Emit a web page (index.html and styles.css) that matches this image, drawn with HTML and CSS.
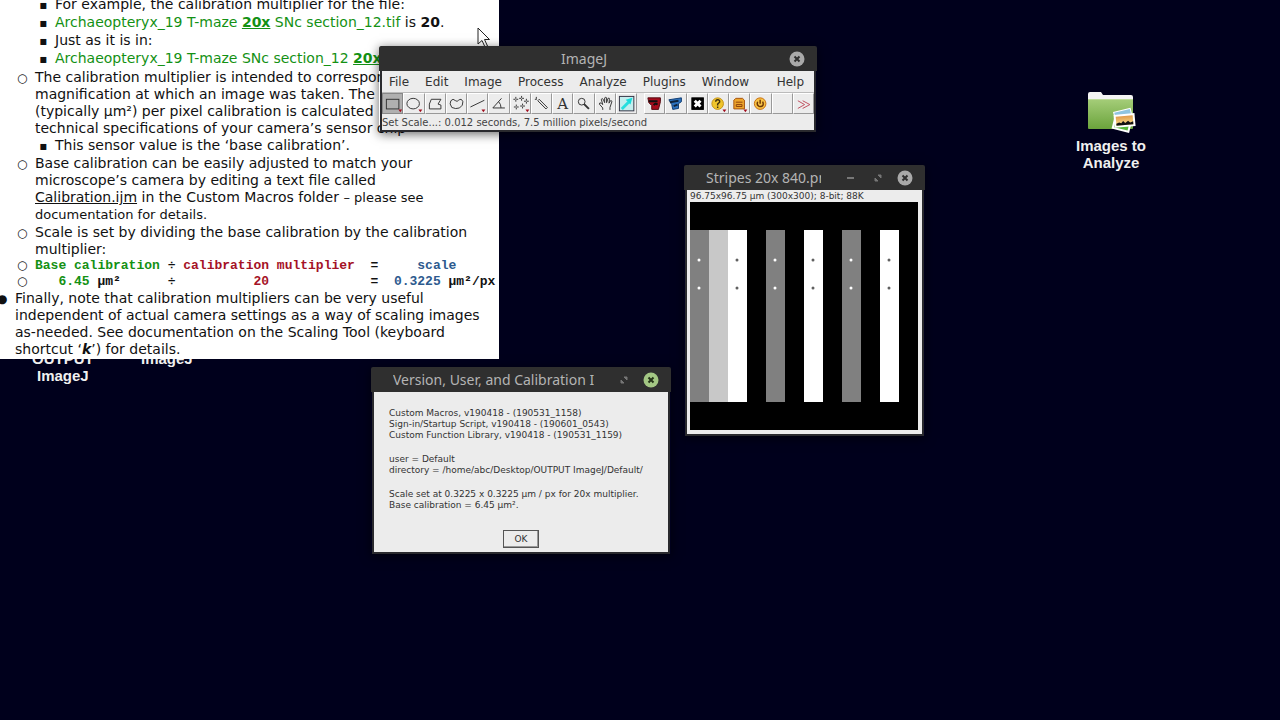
FILE: index.html
```html
<!DOCTYPE html>
<html lang="en">
    <head>
        <meta charset="utf-8">
        <title>ImageJ scaling</title>
        <link rel="stylesheet" href="styles.css">
    </head>
    <body>
        <main class="desktop">
            <!-- desktop icons -->
            <div class="icon iconOutput">OUTPUT<br>ImageJ</div>
            <div class="icon iconImagej">ImageJ</div>
            <div class="icon iconImages">
                <svg width="50" height="42" viewBox="0 0 50 42">
                    <defs>
                        <linearGradient id="folder" x1="0" y1="0" x2="0" y2="1">
                            <stop offset="0" stop-color="#a5cd79"/>
                            <stop offset="1" stop-color="#6ba43c"/>
                        </linearGradient>
                        <linearGradient id="sunset" x1="0" y1="0" x2="0" y2="1">
                            <stop offset="0" stop-color="#e09a4c"/>
                            <stop offset="1" stop-color="#fbe08a"/>
                        </linearGradient>
                    </defs>
                    <path d="M2 3 Q2 1 4 1 H15 L17 4 H45 Q47 4 47 6 V14 H2 Z" fill="#f4f4f4"/>
                    <rect x="2" y="8" width="45" height="30" rx="1" fill="url(#folder)"/>
                    <path d="M2 8.500 H47" stroke="#bcdc98"/>
                    <g transform="rotate(14 36 33)">
                        <rect x="27" y="26" width="18" height="14" fill="#fff"/>
                        <rect x="29" y="28" width="14" height="10" fill="#58b83a"/>
                    </g>
                    <g transform="rotate(-14 36 24)">
                        <rect x="28" y="19" width="18" height="12" fill="#fff"/>
                        <rect x="29" y="20" width="16" height="10" fill="#8fc4e0"/>
                    </g>
                    <g transform="rotate(-5 38 29)">
                        <rect x="28" y="23" width="21" height="13" fill="#fff"/>
                        <rect x="30" y="25" width="17" height="9" fill="url(#sunset)"/>
                        <path d="M30 34 V32 L33 31 L35 32 L37 30 L39 32 L42 30 L44 32 L47 31 V34 Z" fill="#111"/>
                    </g>
                </svg>
                <span>Images to<br>Analyze</span>
            </div>

            <!-- notes -->
            <section class="notes">
                <ul class="outer">
                    <li class="blank">
                        <ul class="circles">
                            <li class="blank">
                                <ul class="squares">
                                    <li>For example, the calibration multiplier for the file:</li>
                                    <li><span class="green">Archaeopteryx_19 T-maze <b><u>20x</u></b> SNc section_12.tif</span> is <b>20</b>.</li>
                                    <li>Just as it is in:</li>
                                    <li><span class="green">Archaeopteryx_19 T-maze SNc section_12 <b><u>20x</u></b></span></li>
                                </ul>
                            </li>
                            <li>The calibration multiplier is intended to correspond<br>
                                magnification at which an image was taken. The<br>
                                (typically µm²) per pixel calibration is calculated<br>
                                technical specifications of your camera’s sensor chip
                                <ul class="squares">
                                    <li>This sensor value is the ‘base calibration’.</li>
                                </ul>
                            </li>
                            <li>Base calibration can be easily adjusted to match your<br>
                                microscope’s camera by editing a text file called<br>
                                <u>Calibration.ijm</u> in the Custom Macros folder <small>– please see<br>
                                documentation for details.</small>
                            </li>
                            <li>Scale is set by dividing the base calibration by the calibration<br>
                                multiplier:</li>
                            <li class="formula"><span class="green">Base calibration</span> ÷ <span class="red">calibration multiplier</span>  =     <span class="blue">scale</span></li>
                            <li class="formula">   <span class="green">6.45</span> µm²      ÷          <span class="red">20</span>             =  <span class="blue">0.3225</span> µm²/px</li>
                        </ul>
                    </li>
                    <li>Finally, note that calibration multipliers can be very useful<br>
                        independent of actual camera settings as a way of scaling images<br>
                        as-needed. See documentation on the Scaling Tool (keyboard<br>
                        shortcut ‘<b><i>k</i></b>’) for details.</li>
                </ul>
            </section>

            <svg class="cursor" width="14" height="22" viewBox="0 0 14 22">
                <path d="M1 1 V17 L5 13.500 L8 20 L10.500 19 L7.500 12.500 H12.500 Z" fill="#fff" stroke="#222"/>
            </svg>

            <!-- ImageJ main window -->
            <section class="window mainWin">
                <header class="titleBar">
                    <h2 class="centered">ImageJ</h2>
                    <button class="winBtn close" aria-label="Close">
                        <svg width="16" height="16" viewBox="0 0 16 16"><circle cx="8" cy="8" r="7.500" fill="#a9a9a9"/><path d="M5.500 5.500 L10.500 10.500 M10.500 5.500 L5.500 10.500" stroke="#2f2f2f" stroke-width="2"/></svg>
                    </button>
                </header>
                <div class="winBody">
                    <nav class="menu">
                        <button>File</button>
                        <button>Edit</button>
                        <button>Image</button>
                        <button>Process</button>
                        <button>Analyze</button>
                        <button>Plugins</button>
                        <button>Window</button>
                        <button class="help">Help</button>
                    </nav>
                    <div class="tools">
                        <button class="on" aria-label="Rectangle"><svg viewBox="0 0 20 20"><rect x="3.500" y="5.500" width="13" height="10"/><path class="tri" d="M16 16 h4 l-2 3z"/></svg></button>
                        <button aria-label="Oval"><svg viewBox="0 0 20 20"><ellipse cx="9.500" cy="10" rx="6.500" ry="5.500"/><path class="tri" d="M15 16 h4 l-2 3z"/></svg></button>
                        <button aria-label="Polygon"><svg viewBox="0 0 20 20"><path d="M5.500 5.500 H15.500 L12.500 10.500 L15.500 11.500 V15.500 H3.500 V10.500 Z"/></svg></button>
                        <button aria-label="Freehand"><svg viewBox="0 0 20 20"><path d="M4 7 Q6 4 9 7 Q10.500 8.500 12 6.500 Q15 4 16.500 8 Q17 12 13 14.500 Q9 16 5 14 Q2 10 4 7 Z"/></svg></button>
                        <button aria-label="Line"><svg viewBox="0 0 20 20"><path d="M2.500 13.500 L17 6.500"/><path class="tri" d="M14 16 h4 l-2 3z"/></svg></button>
                        <button aria-label="Angle"><svg viewBox="0 0 20 20"><path d="M13 4.500 L4 14.500 H16.500 M10 8 Q12.500 10.500 12.500 14.500"/></svg></button>
                        <button aria-label="Multi-point"><svg viewBox="0 0 20 20"><path d="M5 3v5 M2.500 5.500h5 M11 2v5 M8.500 4.500h5 M16 5v5 M13.500 7.500h5 M5.500 11v5 M3 13.500h5 M12 10v5 M9.500 12.500h5" stroke-dasharray="2 1"/><path class="tri" d="M15 16 h4 l-2 3z"/></svg></button>
                        <button aria-label="Wand"><svg viewBox="0 0 20 20"><path d="M6 7 L14.500 15.500 L16 14 L7.500 5.500 Z M4.500 3v2 M3 5.500h2"/></svg></button>
                        <button aria-label="Text" class="letter">A</button>
                        <button aria-label="Magnifier"><svg viewBox="0 0 20 20"><circle cx="8" cy="8" r="3.500"/><path d="M10.500 10.500 L15.500 15.500" stroke-width="2"/></svg></button>
                        <button aria-label="Hand"><svg viewBox="0 0 20 20"><path d="M7 16.500 V14.500 L3.500 10.500 Q3.500 8.500 5.500 9.500 L7 11 L5.500 5.500 Q6.500 4 7.500 5.500 L9 9 V4 Q10.500 2.500 11 4 V9 L12.500 4.500 Q14 3.500 14 5.500 L13.500 9.500 L15 7 Q16.500 6.500 16.500 8 L14.500 14 V16.500"/></svg></button>
                        <button aria-label="Color picker"><svg viewBox="0 0 20 20"><rect x="2.500" y="2.500" width="15" height="15" fill="#c4eeee" stroke="#334"/><path d="M5 15.500 L12 8.500" stroke="#27dede" stroke-width="3"/><path d="M9 6 L14 11 L16 4 Z" fill="#17dddd" stroke="none"/></svg></button>
                        <span></span>
                        <button aria-label="Macro red"><svg viewBox="0 0 20 20"><path d="M3 4 H16 V8 L14 16 H7 V12 L4 9 Z" fill="#a60c1c" stroke="#520810"/><path d="M4 7.500 H13 M9 11.500 Q11 9 13 11" stroke="#111" stroke-width="2"/></svg></button>
                        <button aria-label="Macro blue"><svg viewBox="0 0 20 20"><path d="M3 6 L16 4 V8 L13 10 V15 L7 16 L6 11 Z" fill="#2c72bf" stroke="#123c70"/><path d="M4 8.500 L13 7 M8 12.500 L12 11" stroke="#10243c" stroke-width="2"/></svg></button>
                        <button aria-label="Close all"><svg viewBox="0 0 20 20"><rect x="4" y="4" width="12" height="12" fill="#000" stroke="#000"/><path d="M7 7 L13 13 M13 7 L7 13" stroke="#fff" stroke-width="3"/></svg></button>
                        <button aria-label="Question"><svg viewBox="0 0 20 20"><circle cx="9" cy="10" r="6" fill="#f0c52c" stroke="#c49217"/><path d="M7 8 Q7 6 9 6 Q11.500 6 11 8.500 L9 10.500 V12 M9 13 V14.500" stroke="#40300c" stroke-width="1.500"/><path class="tri" d="M14 16 h4 l-2 3z"/></svg></button>
                        <button aria-label="Archive"><svg viewBox="0 0 20 20"><path d="M4 15.500 V6.500 L6 4.500 H13 L15 6.500 V15.500 Z" fill="#eda52c" stroke="#a4500c"/><path d="M6 8.500 H13 M6.500 11 V13 H12.500 V11 Z" stroke="#8c410b"/><path class="tri" d="M14 16 h4 l-2 3z"/></svg></button>
                        <button aria-label="Power"><svg viewBox="0 0 20 20"><circle cx="9.500" cy="10" r="6" fill="#f7c245" stroke="#c86c0e"/><path d="M7 8 Q5.500 11 8 12.500 Q11 14 12.500 11.500 Q13 9.500 12 8 M9.500 6 V10" stroke="#6e3706" stroke-width="1.500"/></svg></button>
                        <button aria-label="Empty"></button>
                        <button aria-label="More tools"><svg viewBox="0 0 20 20"><path d="M4 7 L11 11 L4 15 M9 7 L16.500 11 L9 15" stroke="#c04c5c"/></svg></button>
                    </div>
                    <p class="status">Set Scale...: 0.012 seconds, 7.5 million pixels/second</p>
                </div>
            </section>

            <!-- image window -->
            <section class="window stripesWin">
                <header class="titleBar">
                    <h2>Stripes 20x 840.png</h2>
                    <button class="winBtn" aria-label="Minimize">
                        <svg width="16" height="16" viewBox="0 0 16 16"><path d="M4 8 H11" stroke="#777" stroke-width="2"/></svg>
                    </button>
                    <button class="winBtn" aria-label="Maximize">
                        <svg width="16" height="16" viewBox="0 0 16 16"><path d="M8 5 H11 V8 Z M5 8 V11 H8 Z" fill="#777" stroke="#777"/></svg>
                    </button>
                    <button class="winBtn close" aria-label="Close">
                        <svg width="16" height="16" viewBox="0 0 16 16"><circle cx="8" cy="8" r="7.500" fill="#a9a9a9"/><path d="M5.500 5.500 L10.500 10.500 M10.500 5.500 L5.500 10.500" stroke="#2f2f2f" stroke-width="2"/></svg>
                    </button>
                </header>
                <div class="winBody">
                    <p class="info">96.75x96.75 µm (300x300); 8-bit; 88K</p>
                    <svg class="stripes" viewBox="0 0 228 228">
                        <rect width="228" height="228" fill="#000"/>
                        <g fill="#808080">
                            <rect x="0" y="28" width="19" height="172"/>
                            <rect x="76" y="28" width="19" height="172"/>
                            <rect x="152" y="28" width="19" height="172"/>
                        </g>
                        <rect x="19" y="28" width="19" height="172" fill="#c8c8c8"/>
                        <g fill="#fff">
                            <rect x="38" y="28" width="19" height="172"/>
                            <rect x="114" y="28" width="19" height="172"/>
                            <rect x="190" y="28" width="19" height="172"/>
                            <circle cx="9" cy="58" r="1.500"/><circle cx="85" cy="58" r="1.500"/><circle cx="161" cy="58" r="1.500"/>
                            <circle cx="9" cy="86" r="1.500"/><circle cx="85" cy="86" r="1.500"/><circle cx="161" cy="86" r="1.500"/>
                        </g>
                        <g fill="#606060">
                            <circle cx="47" cy="58" r="1.500"/><circle cx="123" cy="58" r="1.500"/><circle cx="199" cy="58" r="1.500"/>
                            <circle cx="47" cy="86" r="1.500"/><circle cx="123" cy="86" r="1.500"/><circle cx="199" cy="86" r="1.500"/>
                        </g>
                    </svg>
                </div>
            </section>

            <!-- startup dialog -->
            <section class="window infoWin">
                <header class="titleBar">
                    <h2>Version, User, and Calibration Info</h2>
                    <button class="winBtn" aria-label="Maximize">
                        <svg width="16" height="16" viewBox="0 0 16 16"><path d="M8 5 H11 V8 Z M5 8 V11 H8 Z" fill="#777" stroke="#777"/></svg>
                    </button>
                    <button class="winBtn close" aria-label="Close">
                        <svg width="16" height="16" viewBox="0 0 16 16"><circle cx="8" cy="8" r="7.500" fill="#a3c784"/><path d="M5.500 5.500 L10.500 10.500 M10.500 5.500 L5.500 10.500" stroke="#243318" stroke-width="2"/></svg>
                    </button>
                </header>
                <div class="winBody">
                    <p>Custom Macros, v190418 - (190531_1158)<br>
                        Sign-in/Startup Script, v190418 - (190601_0543)<br>
                        Custom Function Library, v190418 - (190531_1159)</p>
                    <p>user = Default<br>
                        directory = /home/abc/Desktop/OUTPUT ImageJ/Default/</p>
                    <p>Scale set at 0.3225 x 0.3225 µm / px for 20x multiplier.<br>
                        Base calibration = 6.45 µm².</p>
                    <button class="ok">OK</button>
                </div>
            </section>
        </main>
    </body>
</html>
```
FILE: styles.css
```css
*{
    box-sizing: border-box;
}

body{
    margin: 0;
}

h2, p, ul{
    margin: 0;
    padding: 0;
}

button{
    padding: 0;
    border: 0;
    background: none;
    font: inherit;
    color: inherit;
}

.desktop{
    position: relative;
    min-height: 100vh;
    overflow: hidden;
    background-color: #00001c;
    font-family: "DejaVu Sans", sans-serif;
}

/* desktop icons */
.icon{
    position: absolute;
    display: flex;
    flex-direction: column;
    align-items: center;
    gap: 4px;
    font: bold 15px/17px "Liberation Sans", sans-serif;
    text-align: center;
    color: #f0f0f0;
}

.iconOutput{
    left: 32px;
    top: 350px;
}

.iconImagej{
    left: 141px;
    top: 350px;
}

.iconImages{
    left: 1076px;
    top: 91px;
}

/* notes, the last line stays at the bottom edge */
.notes{
    position: absolute;
    left: 0;
    top: 0;
    width: 499px;
    height: 359px;
    display: flex;
    flex-direction: column;
    justify-content: flex-end;
    overflow: hidden;
    background-color: #fff;
    font-size: 14px;
    line-height: 17px;
    white-space: nowrap;
    color: #111;
}

.notes small{
    font-size: 13px;
}

.notes li::marker{
    font: 12px "DejaVu Sans", sans-serif;
}

.outer{
    padding-left: 15px;
    padding-bottom: 1px;
    list-style: "●  ";
}

.circles{
    padding-left: 20px;
    list-style: "○  ";
}

.circles > li{
    padding-top: 1px;
}

.squares{
    padding-left: 20px;
    list-style: "▪  ";
}

.blank > .squares{
    line-height: 18px;
    padding-bottom: 1px;
}

.notes .blank{
    list-style: none;
}

.notes .formula{
    padding: 0;
    font: bold 13px/16px "Liberation Mono", monospace;
    white-space: pre;
}

.green{
    color: #149114;
}

.red{
    color: #a51226;
}

.blue{
    color: #2d5a8e;
}

.cursor{
    position: absolute;
    left: 477px;
    top: 27px;
}

/* windows */
.window{
    position: absolute;
    box-shadow: 0 2px 10px rgba(0, 0, 0, 0.6);
}

.titleBar{
    display: flex;
    align-items: center;
    gap: 11px;
    height: 25px;
    padding: 0 12px 0 22px;
    border-radius: 2px 2px 0 0;
    background-color: #2f2f2f;
    color: #b4b4b4;
}

.titleBar h2{
    flex: 1;
    margin-right: 11px;
    overflow: hidden;
    white-space: nowrap;
    font: 14px/24px "Noto Sans", sans-serif;
}

.titleBar .centered{
    text-align: center;
}

.winBtn{
    display: flex;
}

.winBody{
    margin: 0 1px;
    border: 2px solid #2a2a2e;
    border-top: 0;
    background-color: #ececec;
    color: #333;
}

.mainWin{
    left: 379px;
    top: 46px;
    width: 438px;
}

.menu{
    display: flex;
    gap: 16px;
    padding: 2px 10px 0 7px;
    font-size: 12px;
    line-height: 19px;
}

.menu .help{
    margin-left: auto;
}

.tools{
    display: grid;
    grid-template-columns: repeat(12, 1fr) 7px repeat(8, 1fr);
    height: 22px;
    border-top: 1px solid #bbb;
}

.tools button{
    display: flex;
    align-items: center;
    justify-content: center;
    border: 1px solid #fff;
    border-right-color: #999;
    border-bottom-color: #999;
}

.tools .on{
    background-color: #b0b0b0;
    border-color: #888;
}

.tools svg{
    width: 100%;
    height: 100%;
    fill: none;
    stroke: #333;
}

.tools .tri{
    fill: #a00c1c;
    stroke: none;
}

.tools .letter{
    font: 15px "DejaVu Serif", serif;
}

.status{
    padding-top: 2px;
    font-size: 10px;
    line-height: 14px;
    white-space: nowrap;
    color: #444;
}

.stripesWin{
    left: 684px;
    top: 165px;
    width: 241px;
}

.stripesWin .winBody{
    padding: 0 4px 4px 3px;
}

.info{
    font-size: 9px;
    line-height: 12px;
    white-space: nowrap;
}

.stripes{
    display: block;
    width: 100%;
}

.infoWin{
    left: 371px;
    top: 367px;
    width: 300px;
}

.infoWin .winBody{
    display: flex;
    flex-direction: column;
    gap: 13px;
    padding: 16px 15px 4px;
    font-size: 9px;
    line-height: 11px;
    white-space: nowrap;
}

.ok{
    align-self: center;
    width: 36px;
    height: 18px;
    margin-top: 6px;
    border: 1px solid #555;
    box-shadow: inset -1px -1px #999;
}
```
